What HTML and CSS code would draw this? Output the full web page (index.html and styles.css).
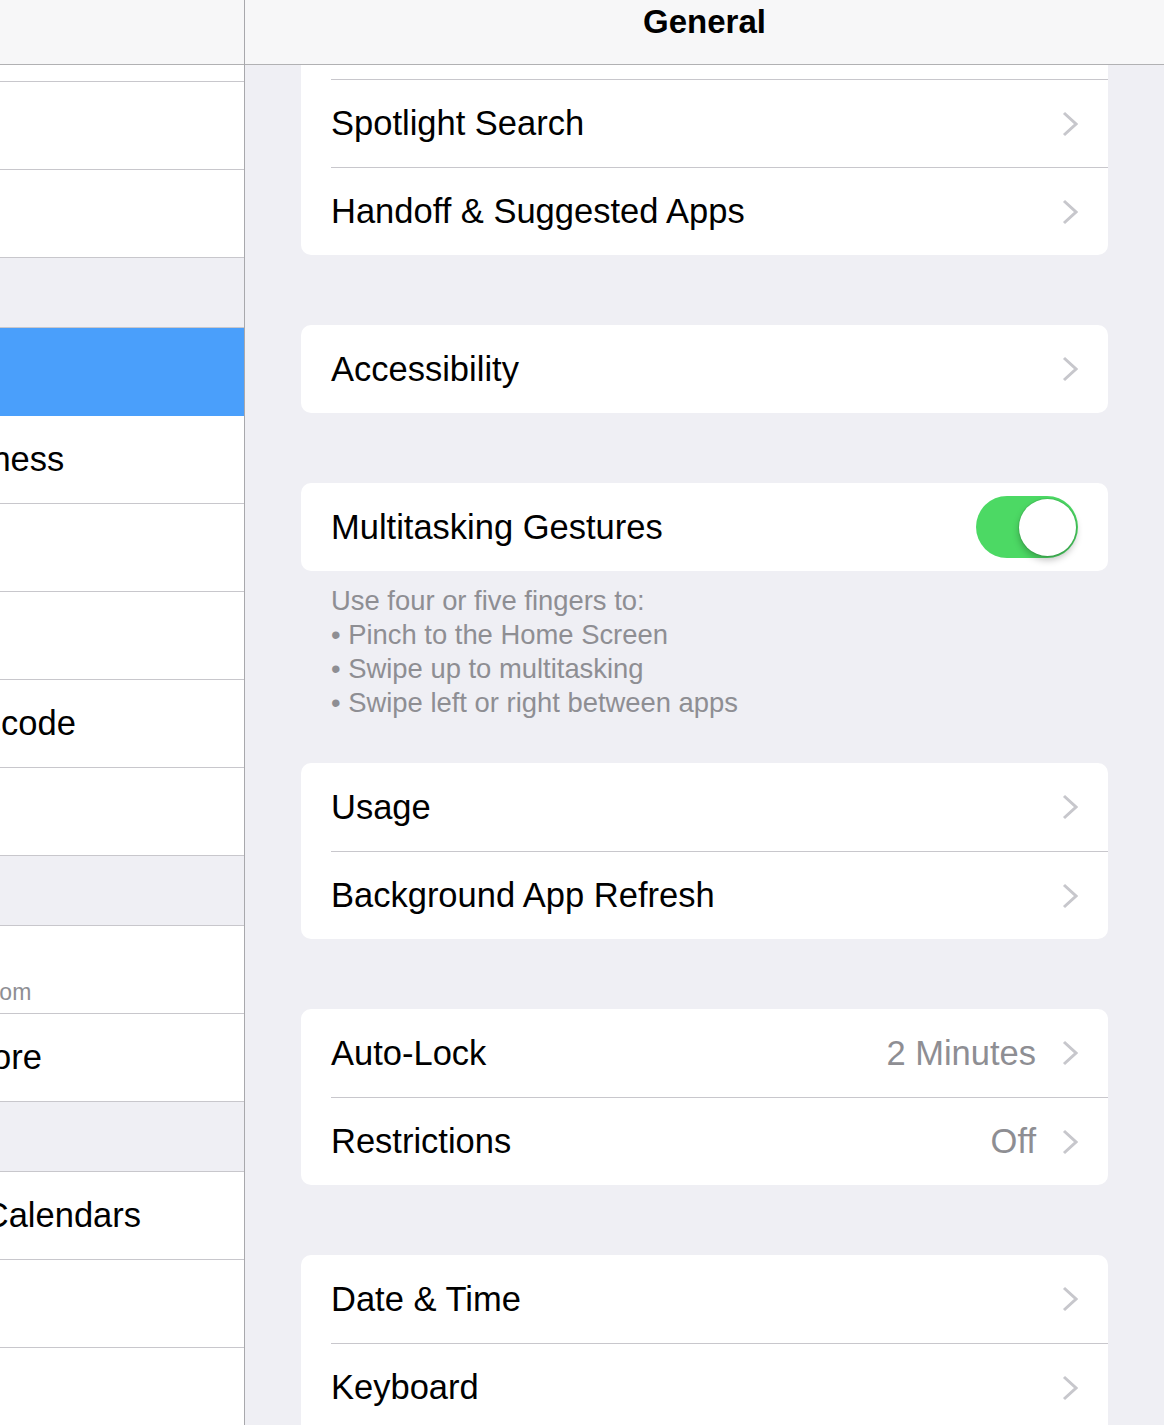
FILE: index.html
```html
<!DOCTYPE html>
<html>
<head>
    <meta charset="UTF-8">
    <title>Settings — General</title>
    <link rel="stylesheet" href="styles.css">
</head>
<body>

    <div class="l-split">

        <aside class="master">
            <div class="navbar"></div>
            <div class="pane-scroll">
                <div class="master-wide master-list">

                    <ul class="group">
                        <li class="cell"><span class="icon icon-red"></span><span class="cell-body">Notifications</span></li>
                        <li class="cell"><span class="icon icon-gray"></span><span class="cell-body">Control Center</span></li>
                        <li class="cell"><span class="icon icon-purple"></span><span class="cell-body">Do Not Disturb</span></li>
                    </ul>

                    <ul class="group">
                        <li class="cell is-selected"><span class="icon icon-gray"></span><span class="cell-body">General</span></li>
                        <li class="cell"><span class="icon icon-blue"></span><span class="cell-body">Display &amp; Brightness</span></li>
                        <li class="cell"><span class="icon icon-cyan"></span><span class="cell-body">Wallpaper</span></li>
                        <li class="cell"><span class="icon icon-red"></span><span class="cell-body">Sounds</span></li>
                        <li class="cell"><span class="icon icon-red"></span><span class="cell-body">Touch ID &amp; Passcode</span></li>
                        <li class="cell"><span class="icon icon-gray"></span><span class="cell-body">Privacy</span></li>
                    </ul>

                    <ul class="group">
                        <li class="cell"><span class="icon icon-white"></span>
                            <span class="cell-body cell-body--subtitle">
                                <span>iCloud</span>
                                <span class="cell-subtitle">john.appleseed@icloud.com</span>
                            </span>
                        </li>
                        <li class="cell"><span class="icon icon-blue"></span><span class="cell-body">iTunes &amp; App Store</span></li>
                    </ul>

                    <ul class="group">
                        <li class="cell"><span class="icon icon-blue"></span><span class="cell-body">Mail, Contacts, Calendars</span></li>
                        <li class="cell"><span class="icon icon-yellow"></span><span class="cell-body">Notes</span></li>
                        <li class="cell"><span class="icon icon-white"></span><span class="cell-body">Reminders</span></li>
                    </ul>

                </div>
            </div>
        </aside>

        <main class="detail">
            <div class="navbar">
                <h1 class="navbar-title">General</h1>
            </div>
            <div class="pane-scroll">
                <div class="detail-list">

                    <section class="section">
                        <div class="card">
                            <div class="row"><div class="row-body"><span class="row-title">Siri</span><svg class="chevron" width="16" height="26" viewBox="0 0 16 26"><path d="M2 2 L14 13 L2 24"/></svg></div></div>
                            <div class="row"><div class="row-body"><span class="row-title">Spotlight Search</span><svg class="chevron" width="16" height="26" viewBox="0 0 16 26"><path d="M2 2 L14 13 L2 24"/></svg></div></div>
                            <div class="row"><div class="row-body"><span class="row-title">Handoff &amp; Suggested Apps</span><svg class="chevron" width="16" height="26" viewBox="0 0 16 26"><path d="M2 2 L14 13 L2 24"/></svg></div></div>
                        </div>
                    </section>

                    <section class="section">
                        <div class="card">
                            <div class="row"><div class="row-body"><span class="row-title">Accessibility</span><svg class="chevron" width="16" height="26" viewBox="0 0 16 26"><path d="M2 2 L14 13 L2 24"/></svg></div></div>
                        </div>
                    </section>

                    <section class="section has-footer">
                        <div class="card">
                            <div class="row"><div class="row-body"><span class="row-title">Multitasking Gestures</span><span class="switch is-on"><span class="switch-knob"></span></span></div></div>
                        </div>
                        <div class="section-footer">
                            Use four or five fingers to:<br>
                            • Pinch to the Home Screen<br>
                            • Swipe up to multitasking<br>
                            • Swipe left or right between apps
                        </div>
                    </section>

                    <section class="section">
                        <div class="card">
                            <div class="row"><div class="row-body"><span class="row-title">Usage</span><svg class="chevron" width="16" height="26" viewBox="0 0 16 26"><path d="M2 2 L14 13 L2 24"/></svg></div></div>
                            <div class="row"><div class="row-body"><span class="row-title">Background App Refresh</span><svg class="chevron" width="16" height="26" viewBox="0 0 16 26"><path d="M2 2 L14 13 L2 24"/></svg></div></div>
                        </div>
                    </section>

                    <section class="section">
                        <div class="card">
                            <div class="row"><div class="row-body"><span class="row-title">Auto-Lock</span><span class="row-value">2 Minutes</span><svg class="chevron" width="16" height="26" viewBox="0 0 16 26"><path d="M2 2 L14 13 L2 24"/></svg></div></div>
                            <div class="row"><div class="row-body"><span class="row-title">Restrictions</span><span class="row-value">Off</span><svg class="chevron" width="16" height="26" viewBox="0 0 16 26"><path d="M2 2 L14 13 L2 24"/></svg></div></div>
                        </div>
                    </section>

                    <section class="section">
                        <div class="card">
                            <div class="row"><div class="row-body"><span class="row-title">Date &amp; Time</span><svg class="chevron" width="16" height="26" viewBox="0 0 16 26"><path d="M2 2 L14 13 L2 24"/></svg></div></div>
                            <div class="row"><div class="row-body"><span class="row-title">Keyboard</span><svg class="chevron" width="16" height="26" viewBox="0 0 16 26"><path d="M2 2 L14 13 L2 24"/></svg></div></div>
                            <div class="row"><div class="row-body"><span class="row-title">Language &amp; Region</span><svg class="chevron" width="16" height="26" viewBox="0 0 16 26"><path d="M2 2 L14 13 L2 24"/></svg></div></div>
                        </div>
                    </section>

                </div>
            </div>
        </main>

    </div>

</body>
</html>
```

FILE: styles.css
```css
BODY {
    margin: 0;
    font: 34.5px "Liberation Sans", Arial, sans-serif;
    color: #000;
    background: #EFEFF4;
    }
UL {
    margin: 0;
    padding: 0;
    list-style: none;
    }
H1 {
    margin: 0;
    }
.l-split {
    display: flex;
    width: 1164px;
    height: 1425px;
    overflow: hidden;
    }

/* Nav bars */
.navbar {
    flex: none;
    height: 65px;
    padding-top: 2px;
    box-sizing: border-box;
    border-bottom: 1px solid #B1B1B3;
    background: #F7F7F8;
    text-align: center;
    overflow: hidden;
    }
.navbar-title {
    font-size: 33px;
    line-height: 40px;
    font-weight: bold;
    }
.pane-scroll {
    flex: 1;
    overflow: hidden;
    }

/* Master pane: only its right edge is in view */
.master {
    display: flex;
    flex-direction: column;
    flex: none;
    width: 244px;
    border-right: 1px solid #A8A8AC;
    background: #EFEFF4;
    }
.master-wide {
    width: 616px;
    margin-left: -372px;
    }
.master-list {
    margin-top: -72px;
    }
.group {
    border-top: 1px solid #C8C7CC;
    background: #FFF;
    }
    .group + .group {
        margin-top: 69px;
        }
.cell {
    display: flex;
    align-items: center;
    height: 88px;
    }
    .cell:last-child .cell-body {
        margin-left: -118px;
        padding-left: 118px;
        }
.icon {
    flex: none;
    width: 58px;
    height: 58px;
    margin: 0 30px;
    border-radius: 13px;
    }
.icon-red    { background: #FD3B30; }
.icon-gray   { background: #8E8E93; }
.icon-purple { background: #5856D6; }
.icon-blue   { background: #1D8CF8; }
.icon-cyan   { background: #35AADC; }
.icon-yellow { background: #FFCC00; }
.icon-white  { background: #FFF; border: 1px solid #DDD; box-sizing: border-box; }
.cell-body {
    display: flex;
    align-items: center;
    flex: 1;
    align-self: stretch;
    border-bottom: 1px solid #C8C7CC;
    white-space: nowrap;
    }
.cell-body--subtitle {
    flex-direction: column;
    align-items: flex-start;
    justify-content: center;
    line-height: 40px;
    padding-top: 4px;
    box-sizing: border-box;
    }
.cell-subtitle {
    margin-left: -4px;
    font-size: 23px;
    line-height: 28px;
    color: #8E8E93;
    }
.cell.is-selected {
    background: #4A9FFB;
    color: #FFF;
    }
    .cell.is-selected .cell-body {
        border-bottom-color: #4A9FFB;
        }

/* Detail pane */
.detail {
    display: flex;
    flex-direction: column;
    flex: 1;
    }
.detail-list {
    margin-top: -74px;
    }
.section {
    margin: 0 56px;
    }
    .section + .section {
        margin-top: 70px;
        }
    .section.has-footer + .section {
        margin-top: 43px;
        }
.card {
    background: #FFF;
    border-radius: 10px;
    overflow: hidden;
    }
.row {
    height: 88px;
    padding-left: 30px;
    }
.row-body {
    display: flex;
    align-items: center;
    height: 100%;
    padding-right: 30px;
    box-sizing: border-box;
    }
    .row + .row .row-body {
        border-top: 1px solid #C8C7CC;
        }
.row-title {
    flex: 1;
    white-space: nowrap;
    }
.row-value {
    margin-right: 26px;
    color: #8E8E93;
    }
.chevron {
    flex: none;
    fill: none;
    stroke: #C7C7CC;
    stroke-width: 3;
    }
.section-footer {
    padding: 13px 30px 0;
    font-size: 27.4px;
    line-height: 34px;
    color: #8E8E93;
    }

/* Switch */
.switch {
    display: flex;
    justify-content: flex-start;
    align-items: center;
    flex: none;
    width: 102px;
    height: 62px;
    padding: 0 2px;
    box-sizing: border-box;
    border-radius: 31px;
    background: #E5E5EA;
    }
.switch.is-on {
    justify-content: flex-end;
    background: #4CD964;
    }
.switch-knob {
    width: 57px;
    height: 57px;
    border-radius: 50%;
    background: #FFF;
    box-shadow: 0 0 0 1px rgba(0, 0, 0, .08), 0 4px 7px rgba(0, 0, 0, .25);
    }
```
